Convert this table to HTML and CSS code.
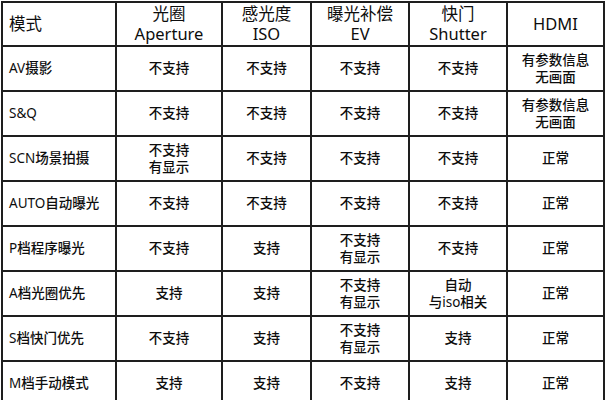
FILE: index.html
```html
<!DOCTYPE html>
<html lang="zh-CN">
<head>
<meta charset="utf-8">
<title>模式对照表</title>
<link rel="stylesheet" href="styles.css">
</head>
<body>
<div class="table">
  <div class="cell head left">模式</div>
  <div class="cell head">光圈<br>Aperture</div>
  <div class="cell head">感光度<br>ISO</div>
  <div class="cell head">曝光补偿<br>EV</div>
  <div class="cell head">快门<br>Shutter</div>
  <div class="cell head">HDMI</div>

  <div class="cell left"><span class="lat">AV</span>摄影</div>
  <div class="cell">不支持</div>
  <div class="cell">不支持</div>
  <div class="cell">不支持</div>
  <div class="cell">不支持</div>
  <div class="cell">有参数信息<br>无画面</div>

  <div class="cell left"><span class="lat">S&amp;Q</span></div>
  <div class="cell">不支持</div>
  <div class="cell">不支持</div>
  <div class="cell">不支持</div>
  <div class="cell">不支持</div>
  <div class="cell">有参数信息<br>无画面</div>

  <div class="cell left"><span class="lat">SCN</span>场景拍摄</div>
  <div class="cell">不支持<br>有显示</div>
  <div class="cell">不支持</div>
  <div class="cell">不支持</div>
  <div class="cell">不支持</div>
  <div class="cell">正常</div>

  <div class="cell left"><span class="lat">AUTO</span>自动曝光</div>
  <div class="cell">不支持</div>
  <div class="cell">不支持</div>
  <div class="cell">不支持</div>
  <div class="cell">不支持</div>
  <div class="cell">正常</div>

  <div class="cell left"><span class="lat">P</span>档程序曝光</div>
  <div class="cell">不支持</div>
  <div class="cell">支持</div>
  <div class="cell">不支持<br>有显示</div>
  <div class="cell">不支持</div>
  <div class="cell">正常</div>

  <div class="cell left"><span class="lat">A</span>档光圈优先</div>
  <div class="cell">支持</div>
  <div class="cell">支持</div>
  <div class="cell">不支持<br>有显示</div>
  <div class="cell"><span class="wrap">自动<br>与<span class="lat">iso</span>相关</span></div>
  <div class="cell">正常</div>

  <div class="cell left"><span class="lat">S</span>档快门优先</div>
  <div class="cell">不支持</div>
  <div class="cell">支持</div>
  <div class="cell">不支持<br>有显示</div>
  <div class="cell">支持</div>
  <div class="cell">正常</div>

  <div class="cell left"><span class="lat">M</span>档手动模式</div>
  <div class="cell">支持</div>
  <div class="cell">支持</div>
  <div class="cell">不支持</div>
  <div class="cell">支持</div>
  <div class="cell">正常</div>
</div>
</body>
</html>
```

FILE: styles.css
```css
html, body {
  margin: 0;
  padding: 0;
  background: #ffffff;
}

body {
  font-family: "Noto Sans", "Open Sans", "Noto Sans CJK SC", sans-serif;
  color: #0d0d0d;
}

.table {
  display: grid;
  grid-template-columns: 114px 106px 89px 98px 98px 97px;
  grid-template-rows: 44px;
  grid-auto-rows: 45px;
  margin: 1px 0 0 1px;
  width: max-content;
  border-left: 2px solid #1e1e1e;
  border-top: 2px solid #1e1e1e;
}

.cell {
  box-sizing: border-box;
  border-right: 2px solid #1e1e1e;
  border-bottom: 2px solid #1e1e1e;
  display: flex;
  align-items: center;
  justify-content: center;
  text-align: center;
  font-size: 13.5px;
  font-weight: 500;
  line-height: 16.5px;
  white-space: nowrap;
}

.cell.left {
  justify-content: flex-start;
  text-align: left;
  padding-left: 6px;
}

.cell.head {
  font-size: 16.5px;
  font-weight: 400;
  line-height: 20px;
}

.wrap {
  display: block;
}

.lat {
  font-weight: 400;
}
```
